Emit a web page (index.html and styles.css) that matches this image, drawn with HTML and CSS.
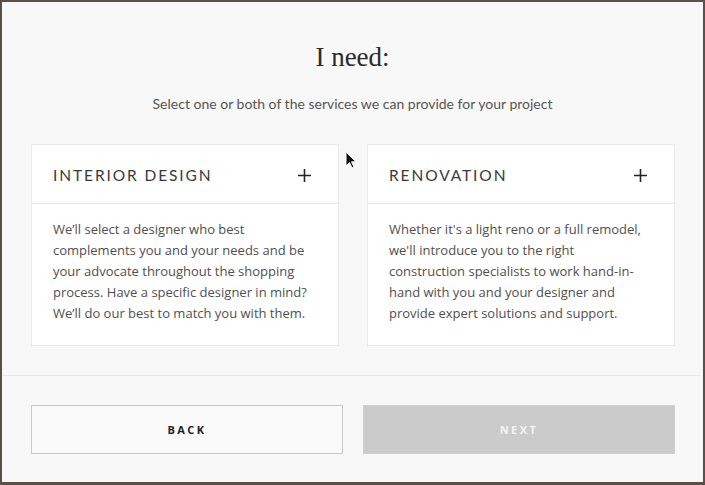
FILE: index.html
```html
<!DOCTYPE html>
<html>
<head>
<meta charset="utf-8">
<link rel="stylesheet" href="styles.css">
</head>
<body>
<div class="modal">
  <h1 class="title">I need:</h1>
  <p class="subtitle">Select one or both of the services we can provide for your project</p>
  <div class="cards">
    <div class="card">
      <div class="card-head">
        <span class="card-title">INTERIOR DESIGN</span>
        <svg class="plus" width="13" height="13" viewBox="0 0 13 13"><path d="M6.5 0v13M0 6.5h13" stroke="#222" stroke-width="1.6"/></svg>
      </div>
      <div class="card-body">We’ll select a designer who best complements you and your needs and be your advocate throughout the shopping process. Have a specific designer in mind? We’ll do our best to match you with them.</div>
    </div>
    <div class="card">
      <div class="card-head">
        <span class="card-title">RENOVATION</span>
        <svg class="plus" width="13" height="13" viewBox="0 0 13 13"><path d="M6.5 0v13M0 6.5h13" stroke="#222" stroke-width="1.6"/></svg>
      </div>
      <div class="card-body">Whether it's a light reno or a full remodel, we'll introduce you to the right construction specialists to work hand-in-hand with you and your designer and provide expert solutions and support.</div>
    </div>
  </div>
  <div class="divider"></div>
  <div class="actions">
    <button class="btn btn-back">BACK</button>
    <button class="btn btn-next">NEXT</button>
  </div>
  <svg class="cursor" width="12" height="18" viewBox="0 0 12 18"><path d="M1 1v14l3.5-3.5 2.5 5.5 2-1-2.5-5.2H11z" fill="#111" stroke="#fff" stroke-width="1"/></svg>
</div>
</body>
</html>
```

FILE: styles.css
```css
html, body {
  margin: 0;
  padding: 0;
}
body {
  width: 705px;
  height: 485px;
  background: #5a5048;
  overflow: hidden;
  font-family: "Open Sans", "Liberation Sans", sans-serif;
}
.modal {
  position: relative;
  margin: 2px 2px 0 2px;
  height: 480px;
  background: #f8f8f8;
  box-sizing: border-box;
  padding-top: 40px;
}
.title {
  margin: 0;
  text-align: center;
  font-family: "Liberation Serif", serif;
  font-weight: normal;
  font-size: 27px;
  line-height: 30px;
  color: #2a2a2a;
}
.subtitle {
  margin: 23px 0 0;
  text-align: center;
  font-family: Lato, "Liberation Sans", sans-serif;
  font-size: 14px;
  line-height: 18px;
  color: #555;
}
.cards {
  display: flex;
  gap: 28px;
  padding: 0 27px 0 29px;
  margin-top: 31px;
}
.card {
  width: 308px;
  background: #fff;
  border: 1px solid #e9e9e9;
  box-sizing: border-box;
}
.card-head {
  height: 59px;
  border-bottom: 1px solid #e6e6e6;
  display: flex;
  align-items: center;
  justify-content: space-between;
  padding: 2px 27px 0 21px;
  box-sizing: border-box;
}
.card-title {
  font-family: Lato, "Liberation Sans", sans-serif;
  font-size: 15.5px;
  letter-spacing: 1.9px;
  color: #3a3a3a;
}
.plus {
  display: block;
}
.card-body {
  padding: 15px 28px 21px 21px;
  font-size: 13px;
  line-height: 21px;
  color: #4f4f4f;
}
.divider {
  margin: 29px 3px 0 1px;
  height: 1px;
  background: #e8e8e8;
}
.actions {
  display: flex;
  gap: 20px;
  padding: 29px 28px 0 29px;
}
.btn {
  flex: 1;
  height: 49px;
  font-family: "Open Sans", "Liberation Sans", sans-serif;
  font-weight: bold;
  font-size: 11px;
  letter-spacing: 2.4px;
  box-sizing: border-box;
}
.btn-back {
  background: #fafafa;
  border: 1px solid #c8c8c8;
  color: #222;
}
.btn-next {
  background: #cbcbcb;
  border: 1px solid #d0d0d0;
  color: #f4f4f4;
}
.cursor {
  position: absolute;
  left: 343px;
  top: 149px;
}
```
